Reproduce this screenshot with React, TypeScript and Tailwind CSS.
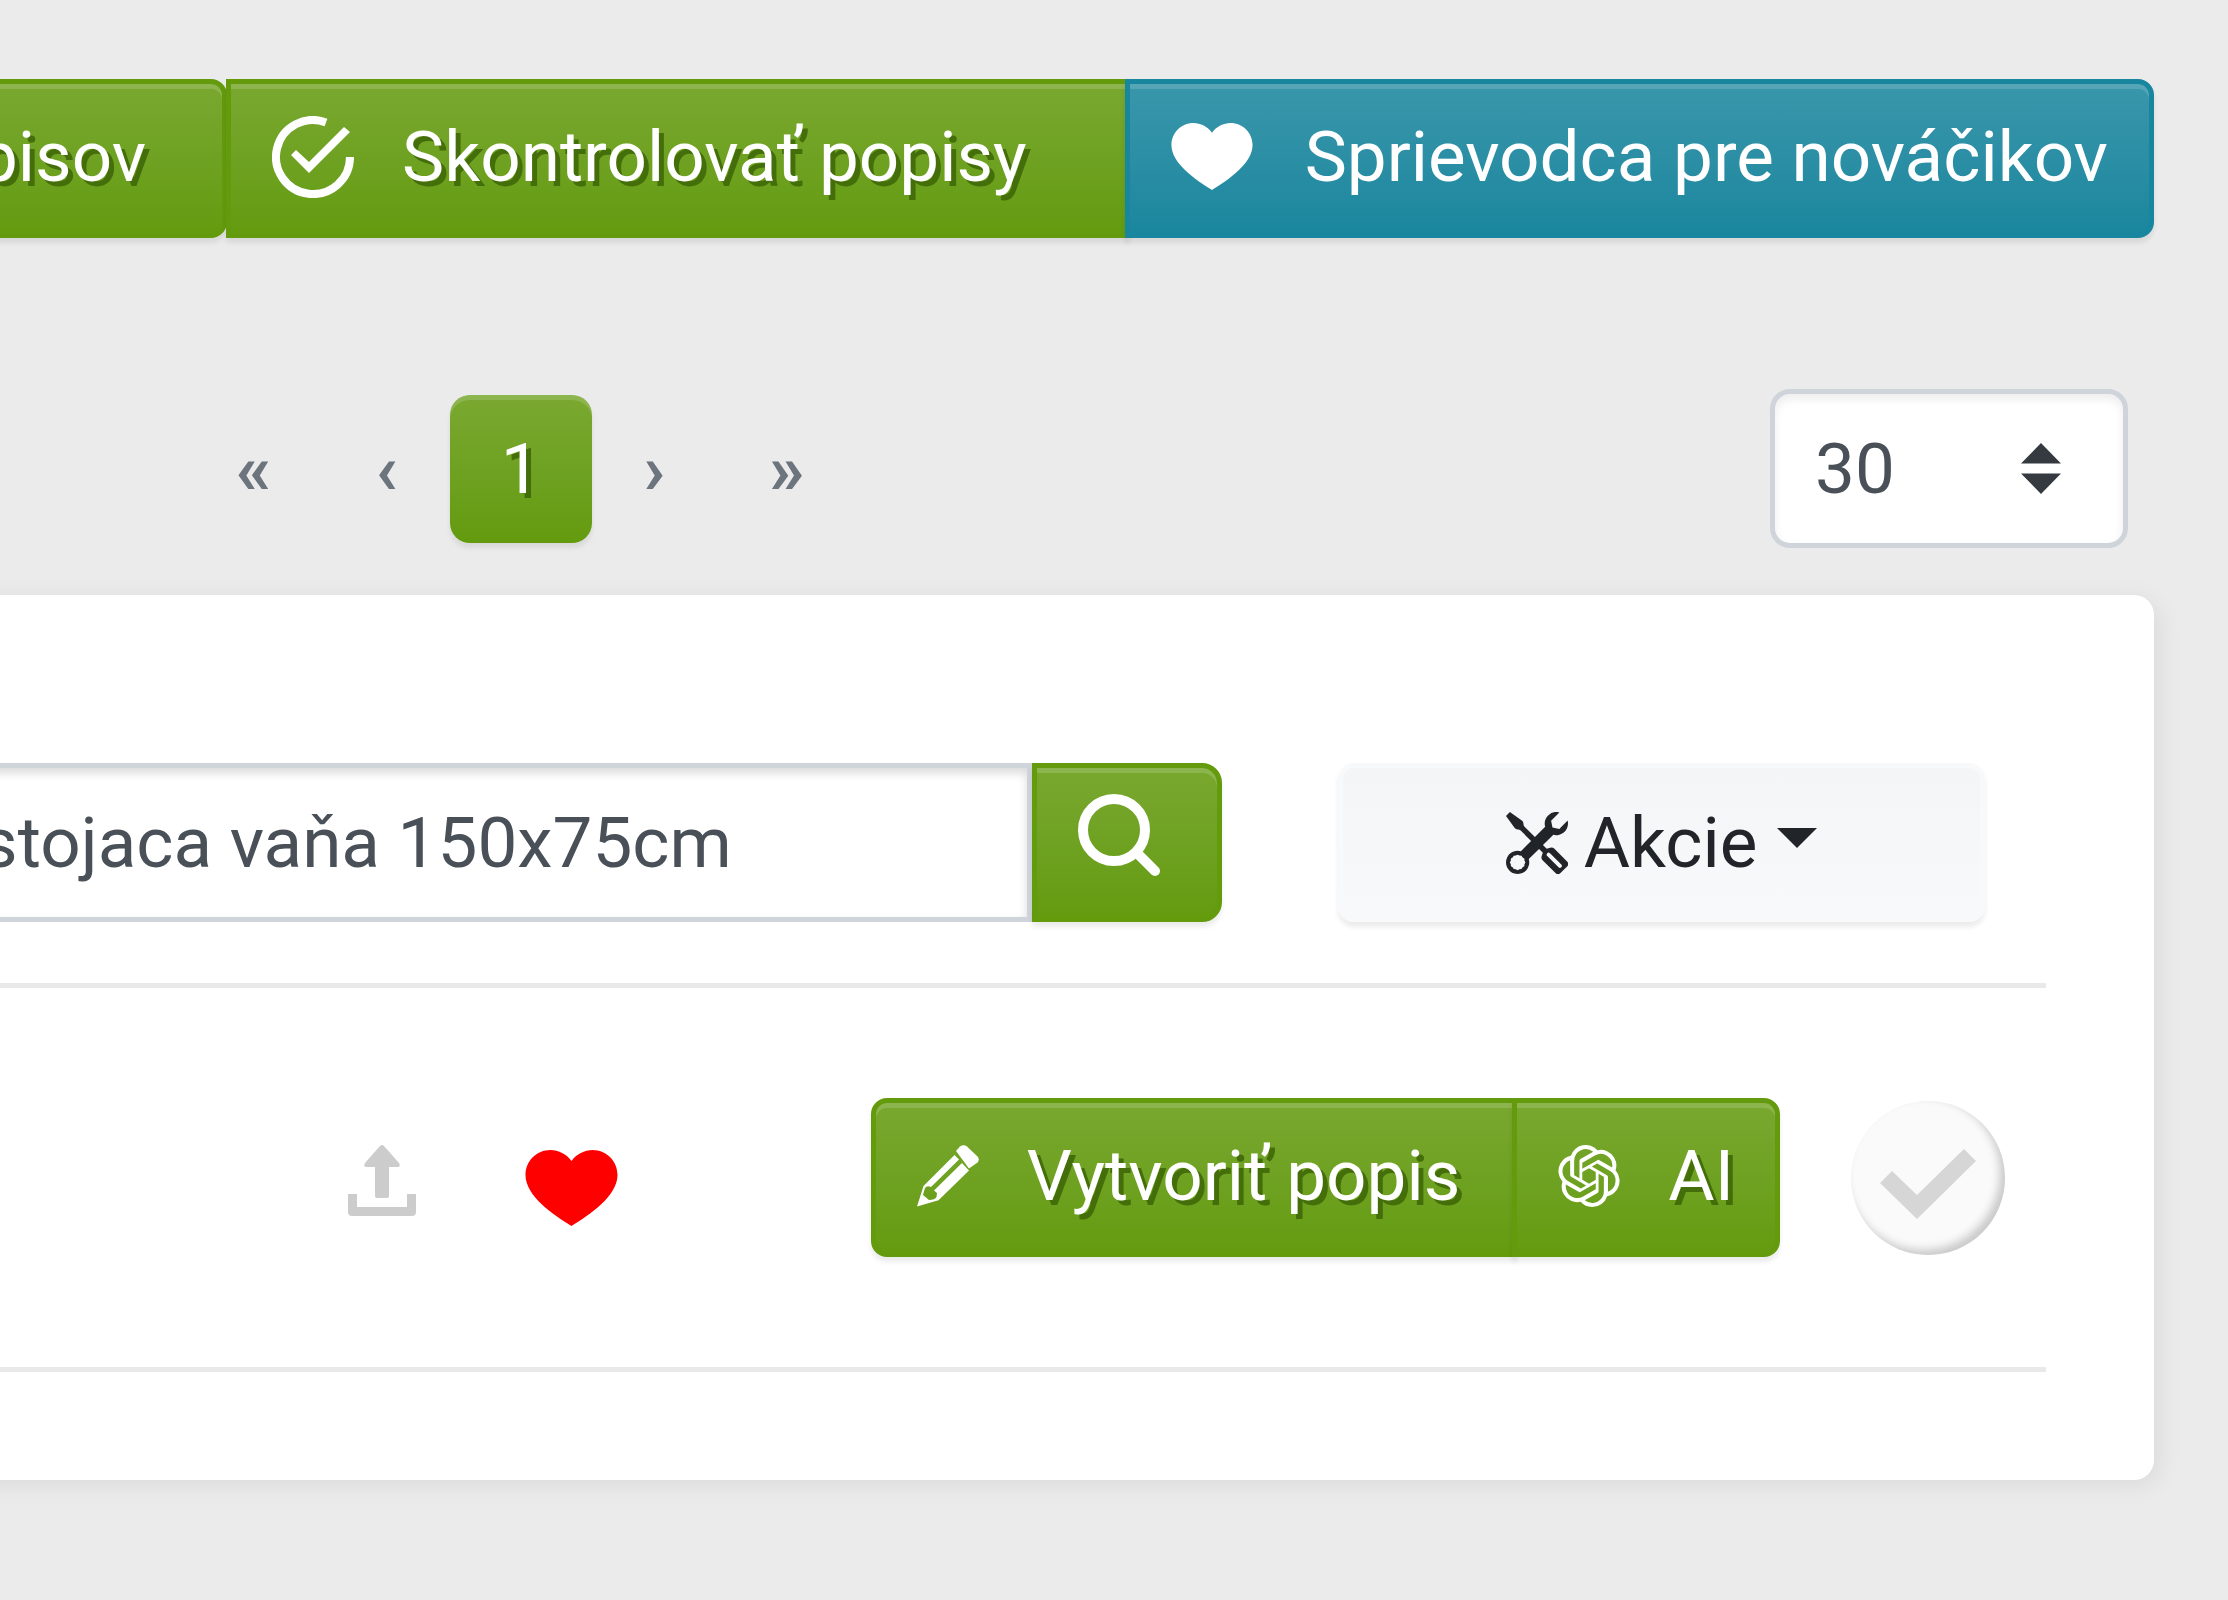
import React, { useState } from 'react';
import { BsTools } from 'react-icons/bs';
import { SiOpenai } from 'react-icons/si';

const green = "border-[5px] border-[#639b0d] bg-linear-to-b from-[#7aa830] to-[#639b0d] bg-origin-border text-white shadow-[inset_0_5px_0_rgba(255,255,255,0.15),0_5px_5px_rgba(0,0,0,0.08)]";
const teal = "border-[5px] border-[#18869e] bg-linear-to-b from-[#3a97ab] to-[#18869e] bg-origin-border text-white shadow-[inset_0_5px_0_rgba(255,255,255,0.15),0_5px_5px_rgba(0,0,0,0.08)]";
const textShadow = "[text-shadow:5px_5px_0_#446e09]";

const HeartIcon = ({ className }: { className: string }) => (
	<svg className={className} viewBox="0 0 92 76" fill="currentColor" aria-hidden="true">
		<path d="M46 76C28 65 0 46 0 25C0 11 11 0 25 0C33 0 41 4 46 11C51 4 59 0 67 0C81 0 92 11 92 25C92 46 64 65 46 76Z" />
	</svg>
)

const CheckCircleIcon = () => (
	<svg className="size-[82px] shrink-0" viewBox="0 0 82 82" aria-hidden="true">
		<path d="M54 6.4A37 37 0 1 0 78 41" fill="none" stroke="currentColor" strokeWidth="8" />
		<path d="M24 34L19 39L37 57L78 16L72 11L37 46Z" fill="currentColor" />
	</svg>
)

const SearchIcon = () => (
	<svg className="size-[82px]" viewBox="0 0 82 82" fill="none" stroke="currentColor" aria-hidden="true">
		<circle cx="36" cy="36" r="31" strokeWidth="10" />
		<path d="M59 59L77 77" strokeWidth="10" strokeLinecap="round" />
	</svg>
)

const PencilIcon = () => (
	<svg className="size-[62px] shrink-0" viewBox="0 0 62 62" fill="currentColor" aria-hidden="true">
		<path d="M39 6L43 1.5Q46.500 -1 50 1.500L60.500 11.500Q63 14.500 60.500 17.500L52 23.500Z" />
		<path d="M37.500 10L42 14.500L14 42Q10 40 8 43L6 50L12 55Q18 55 19.500 52L20 48L17 45.500L45 18L52 25.500L21.500 55.300L0 61.500L6.500 41Z" />
	</svg>
)

const UploadIcon = () => (
	<svg className="h-[71px] w-[68px]" viewBox="0 0 68 71" fill="currentColor" aria-hidden="true">
		<path d="M0 49H9V62H59V49H68V67Q68 71 64 71H4Q0 71 0 67Z" />
		<path d="M32 1Q34 -1 36 1L51 18Q53 22 50 22H41V51Q41 53 39 53H29Q27 53 27 51V22H18Q15 22 17 18Z" />
	</svg>
)

const App: React.FC = () => {
	const [perPage, setPerPage] = useState("30")
	const [search, setSearch] = useState("stojaca vaňa 150x75cm")

	return (
		<div className="min-h-screen overflow-hidden bg-[#ebebeb] pt-[79px] pr-[74px] pb-[120px] font-['Roboto',sans-serif] text-[71px] leading-[106px] text-[#212529]">
			<header className="flex justify-end whitespace-nowrap">
				<button type="button" className={`h-[159px] shrink-0 rounded-r-[16px] pr-[76px] pb-[4px] ${green} ${textShadow}`}>
					popisov
				</button>
				<button type="button" className={`-ml-px flex h-[159px] shrink-0 items-center gap-[48px] pr-[98px] pb-[4px] pl-[41px] ${green} ${textShadow}`}>
					<CheckCircleIcon />
					Skontrolovať popisy
				</button>
				<button type="button" className={`-ml-[5px] flex h-[159px] shrink-0 items-center gap-[52px] rounded-r-[16px] px-[41px] pb-[4px] ${teal}`}>
					<HeartIcon className="h-[67px] w-[82px] shrink-0" />
					Sprievodca pre nováčikov
				</button>
			</header>

			<div className="mt-[151px] flex items-center justify-between pr-[26px] pl-[184px]">
				<nav className="flex text-[#6c757d]" aria-label="Stránkovanie">
					<a href="#first" className="px-[52px] py-[21px] font-bold">«</a>
					<a href="#prev" className="px-[52px] py-[21px] font-bold">‹</a>
					<a href="#1" aria-current="page" className={`rounded-[20px] bg-linear-to-b from-[#7aa830] to-[#639b0d] px-[51px] py-[21px] text-white shadow-[inset_0_5px_0_rgba(255,255,255,0.15),0_5px_5px_rgba(0,0,0,0.08)] ${textShadow}`}>1</a>
					<a href="#next" className="px-[52px] py-[21px] font-bold">›</a>
					<a href="#last" className="px-[52px] py-[21px] font-bold">»</a>
				</nav>
				<div className="relative">
					<select
						aria-label="Počet na stránku"
						className="h-[159px] w-[358px] appearance-none rounded-[20px] border-[5px] border-[#ced4da] bg-white pl-[40px] text-[#495057] shadow-[inset_0_5px_10px_rgba(0,0,0,0.075)]"
						value={perPage}
						onChange={(event) => setPerPage(event.target.value)}
					>
						<option>30</option>
						<option>60</option>
						<option>90</option>
					</select>
					<svg className="pointer-events-none absolute top-[54px] right-[67px] h-[51px] w-[40px]" viewBox="0 0 40 51" fill="#343a40" aria-hidden="true">
						<path d="M20 0L40 20.500H0ZM0 30.500H40L20 51Z" />
					</svg>
				</div>
			</div>

			<main className="mt-[47px] -ml-[170px] rounded-[20px] bg-white pt-[168px] pr-[108px] pb-[108px] pl-[108px] shadow-[5px_5px_25px_rgba(0,0,0,0.07)]">
				<div className="flex border-b-[5px] border-[#e9e9e9] pr-[61px] pb-[61px]">
					<form className="flex flex-1" onSubmit={(event) => event.preventDefault()}>
						<input
							className="h-[159px] min-w-0 flex-1 border-[5px] border-[#ced4da] bg-white px-[38px] text-[#495057] shadow-[inset_0_5px_10px_rgba(0,0,0,0.15)] focus:outline-none"
							type="text"
							aria-label="Hľadať"
							value={search}
							onChange={(event) => setSearch(event.target.value)}
						/>
						<button type="submit" aria-label="Hľadať" className={`h-[159px] rounded-r-[20px] pr-[57px] pb-[15px] pl-[41px] ${green}`}>
							<SearchIcon />
						</button>
					</form>
					<button type="button" className="ml-[116px] flex h-[159px] w-[647px] items-center justify-center rounded-[16px] border-[5px] border-[#f8f9fa] bg-linear-to-b from-[#f4f5f6] to-[#f8f9fb] shadow-[0_5px_5px_rgba(0,0,0,0.08)]">
						<BsTools className="size-[62px]" />
						<span className="ml-[16px]">Akcie</span>
						<svg className="mb-[10px] ml-[20px] h-[20px] w-[40px]" viewBox="0 0 40 20" fill="currentColor" aria-hidden="true">
							<path d="M0 0H40L20 20Z" />
						</svg>
					</button>
				</div>

				<div className="flex items-center justify-end border-b-[5px] border-[#e9e9e9] py-[110px] pr-[41px]">
					<button type="button" aria-label="Nahrať" className="pt-[6px] text-[#cccccc]">
						<UploadIcon />
					</button>
					<button type="button" aria-label="Obľúbené" className="ml-[109px] pt-[20px] text-[#ff0000]">
						<HeartIcon className="h-[76px] w-[93px]" />
					</button>
					<div className="ml-[253px] flex">
						<button type="button" className={`flex h-[159px] items-center gap-[48px] rounded-l-[16px] pr-[52px] pb-[4px] pl-[41px] ${green} ${textShadow}`}>
							<PencilIcon />
							Vytvoriť popis
						</button>
						<button type="button" className={`-ml-[5px] flex h-[159px] items-center gap-[48px] rounded-r-[16px] px-[41px] pb-[4px] ${green} ${textShadow}`}>
							<SiOpenai className="size-[62px]" />
							AI
						</button>
					</div>
					<button type="button" aria-label="Hotovo" className="ml-[71px] flex size-[154px] items-center justify-center rounded-full bg-[#fafafa] pt-[12px] text-[#d6d6d6] shadow-[inset_-5px_-5px_10px_rgba(0,0,0,0.2)]">
						<svg className="h-[70px] w-[96px]" viewBox="0 0 96 70" fill="currentColor" aria-hidden="true">
							<path d="M12 22L0 34L37 70L96 12L84 0L37 46Z" />
						</svg>
					</button>
				</div>
			</main>
		</div>
	);
};

export default App;
